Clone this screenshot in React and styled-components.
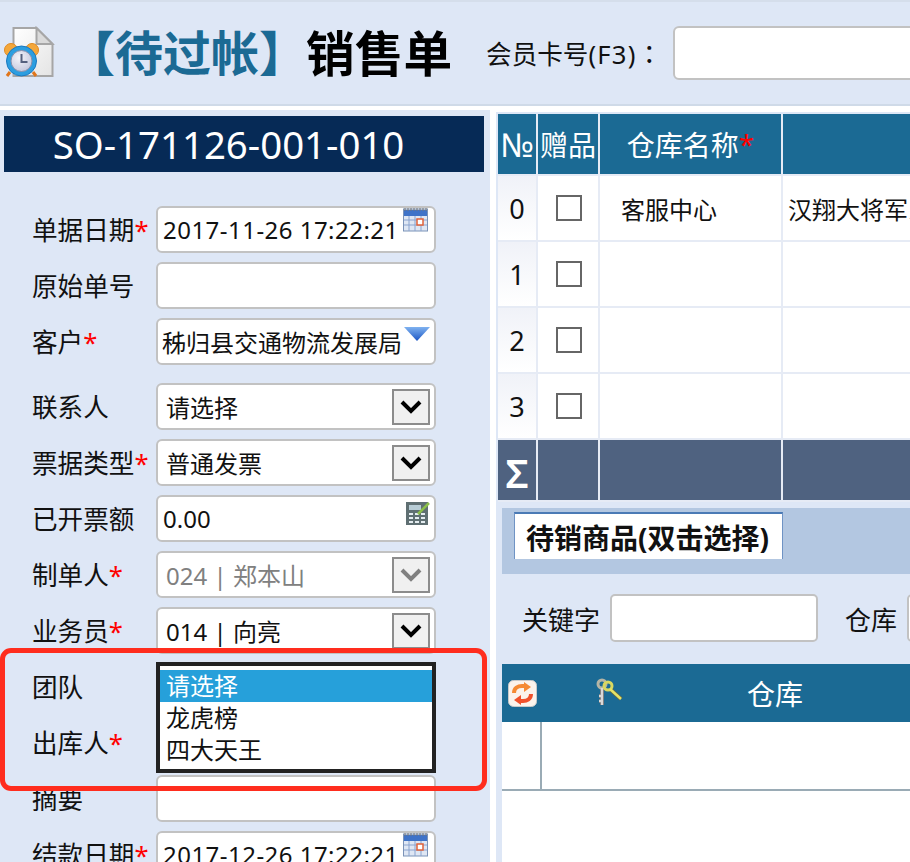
import React from 'react';
import styled, { createGlobalStyle } from 'styled-components';

const GlobalStyle = createGlobalStyle`
    html, body {
        margin: 0;
        padding: 0;
        background: #fff;
    }
    * {
        box-sizing: border-box;
    }
`;

const Page = styled.div`
    position: relative;
    width: 910px;
    height: 862px;
    overflow: hidden;
    background: #fff;
    color: #111;
    font-family: "Noto Sans", "Noto Sans CJK SC", sans-serif;
`;

const Header = styled.header`
    display: flex;
    align-items: center;
    height: 106px;
    padding-left: 3px;
    border-top: 2px solid #d5deeb;
    border-bottom: 2px solid #cfdae8;
    background: #dee7f6;
    white-space: nowrap;
`;

const Logo = styled.span`
    flex: none;
    display: flex;
`;

const Title = styled.h1`
    flex: none;
    margin: 0;
    font-size: ${props => props.$size}px;
    font-weight: 700;
    line-height: 1;
    color: ${props => props.$color};
`;

const Status = styled(Title)`
    margin-left: 12px;
    margin-right: -1px;
`;

const CardLabel = styled.span`
    flex: none;
    margin-left: 34px;
    font-size: 25.6px;
`;

const CardKey = styled.span`
    letter-spacing: 1.2px;
`;

const CardColon = styled.span`
    font-family: "Noto Sans CJK TC", sans-serif;
`;

const CardInput = styled.div`
    flex: none;
    width: 300px;
    height: 54px;
    margin-left: 11px;
    border: 2px solid #c2c2c2;
    border-radius: 6px;
    background: #fff;
`;

const Main = styled.main`
    display: flex;
    height: 752px;
    margin-top: 4px;
`;

const LeftPanel = styled.section`
    flex: none;
    width: 490px;
    padding: 6px 0 0 4px;
    background: #dee7f6;
`;

const OrderNo = styled.div`
    width: 480px;
    height: 56px;
    margin-bottom: 34px;
    padding-right: 31px;
    background: #062a56;
    color: #fff;
    font-size: 38.4px;
    line-height: 56px;
    text-align: center;
`;

const FormRow = styled.div`
    display: flex;
    align-items: flex-start;
    height: 56px;
    padding-left: 27px;
    margin-bottom: ${props => props.$gap || 0}px;
`;

const Label = styled.label`
    flex: none;
    width: 125px;
    height: 46px;
    padding-left: 1px;
    font-size: 25.6px;
    line-height: 49px;
    white-space: nowrap;
`;

const Star = styled.span`
    color: #f00;
`;

const Field = styled.div`
    position: relative;
    flex: none;
    display: flex;
    align-items: center;
    width: 280px;
    height: 47px;
    padding-left: ${props => props.$pad}px;
    border: 2px solid #c2c2c2;
    border-radius: 6px;
    background: #fff;
    color: ${props => props.$disabled ? '#808080' : '#111'};
    font-size: 24px;
    letter-spacing: ${props => props.$wide ? '0.47px' : 'normal'};
    white-space: nowrap;
`;

const FieldIcon = styled.span`
    position: absolute;
    top: ${props => props.$top}px;
    right: ${props => props.$right}px;
    display: flex;
`;

const SelectButton = styled.span`
    position: absolute;
    top: 4px;
    right: 4px;
    display: flex;
    align-items: center;
    justify-content: center;
    width: 38px;
    height: 36px;
    border: 2px solid #8c8c8c;
    background: #f0f0f0;
`;

const Dropdown = styled.ul`
    position: absolute;
    left: 156px;
    top: 662px;
    width: 280px;
    height: 111px;
    margin: 0;
    padding: 4px 0 0;
    border: 4px solid #222;
    background: #fff;
    list-style: none;
    font-size: 24px;
`;

const Option = styled.li`
    height: 32px;
    padding-left: 6px;
    line-height: 32px;
    background: ${props => props.$active ? '#26a0da' : 'transparent'};
    color: ${props => props.$active ? '#fff' : '#111'};
`;

const Callout = styled.div`
    position: absolute;
    left: 0;
    top: 648px;
    width: 487px;
    height: 143px;
    border: 5px solid #ff2d1e;
    border-radius: 11px;
    pointer-events: none;
`;

const RightPanel = styled.section`
    flex: none;
    width: 414px;
    margin-left: 6px;
    margin-top: 2px;
    background: #dee7f6;
    padding-top: 2px;
`;

const Table = styled.div`
    display: grid;
    grid-template-columns: 38px 60px 181px 140px;
    grid-template-rows: 60px repeat(4, 64px) 60px;
    gap: 2px;
    width: 426px;
    margin-left: 2px;
    padding-bottom: 2px;
    background: #e6ebf5;
`;

const HeadCell = styled.div`
    display: flex;
    align-items: center;
    justify-content: center;
    background: #1b6a94;
    color: #fff;
    font-size: ${props => props.$size || 28}px;
    white-space: nowrap;
`;

const IndexCell = styled.div`
    display: flex;
    align-items: center;
    justify-content: center;
    background: linear-gradient(#f0f2f8, #fff);
    font-size: 27px;
`;

const Cell = styled.div`
    display: flex;
    align-items: center;
    justify-content: ${props => props.$center ? 'center' : 'flex-start'};
    padding-left: ${props => props.$pad || 0}px;
    overflow: hidden;
    background: #fff;
    font-size: 24px;
    white-space: nowrap;
`;

const CheckBox = styled.span`
    display: block;
    width: 26px;
    height: 26px;
    border: 2px solid #666;
    background: #fff;
`;

const TotalCell = styled.div`
    display: flex;
    align-items: center;
    justify-content: center;
    padding-top: 5px;
    background: #4f6280;
    color: #fff;
    font-size: 40px;
    font-weight: 600;
`;

const Lower = styled.div`
    margin-left: 6px;
`;

const TabBar = styled.div`
    height: 66px;
    margin-top: 6px;
    padding: 4px 0 0 12px;
    background: #b3c7e1;
`;

const Tab = styled.div`
    width: 269px;
    height: 47px;
    padding-left: 11px;
    border: 1px solid #6f93c4;
    border-top: 2px solid #4a7ab5;
    border-bottom: 0;
    background: #fff;
    font-size: 28px;
    font-weight: 700;
    line-height: 48px;
    white-space: nowrap;
`;

const SearchRow = styled.div`
    display: flex;
    align-items: center;
    height: 88px;
    padding: 2px 0 0 20px;
    font-size: 26px;
    white-space: nowrap;
`;

const SearchInput = styled.div`
    flex: none;
    width: ${props => props.$width}px;
    height: 48px;
    margin: -3px 27px 0 10px;
    border: 2px solid #c2c2c2;
    border-radius: 5px;
    background: #fff;
`;

const GridHead = styled.div`
    display: flex;
    align-items: center;
    height: 58px;
    margin-top: 2px;
    padding-left: 6px;
    background: #1b6a94;
    color: #fff;
    font-size: 28px;
`;

const GridTitle = styled.span`
    margin-left: 124px;
`;

const KeyIcon = styled.span`
    display: flex;
    margin-left: 58px;
`;

const GridBody = styled.div`
    height: 150px;
    background: #fff;
`;

const GridRow = styled.div`
    width: 420px;
    height: 69px;
    border-bottom: 2px solid #9aabb5;
`;

const GridColumn = styled.div`
    width: 40px;
    height: 67px;
    border-right: 2px solid #9aabb5;
`;

const AlarmDocIcon = () => (
    <svg width="52" height="54" viewBox="0 0 52 54">
        <defs>
            <linearGradient id="doc" x1="0" y1="0" x2="1" y2="1">
                <stop offset="0" stopColor="#fff" />
                <stop offset="1" stopColor="#e4e4e4" />
            </linearGradient>
            <radialGradient id="face" cx="0.4" cy="0.35" r="0.8">
                <stop offset="0" stopColor="#f4f4fa" />
                <stop offset="1" stopColor="#bcc0d8" />
            </radialGradient>
        </defs>
        <path d="M10.5 2h23l16 16v32h-39z" fill="url(#doc)" stroke="#a6a6a6" strokeWidth="2" />
        <path d="M33.5 2v16h16z" fill="#dadada" stroke="#a6a6a6" strokeWidth="2" />
        <circle cx="8" cy="24" r="6.5" fill="#f4a73a" stroke="#e08a20" />
        <circle cx="29" cy="24" r="6.5" fill="#f4a73a" stroke="#e08a20" />
        <path d="M7 46l-3 4M30 46l3 4" stroke="#e0761c" strokeWidth="3" />
        <circle cx="18.5" cy="35" r="15" fill="#2c9ee0" stroke="#1a78c0" />
        <circle cx="18.5" cy="35" r="10.5" fill="url(#face)" stroke="#8a90ac" />
        <path d="M18.5 28v8h6" fill="none" stroke="#55607e" strokeWidth="2" />
    </svg>
);

const CalendarIcon = () => (
    <svg width="25" height="25" viewBox="0 0 25 25">
        <rect x="0.5" y="2" width="24" height="22" fill="#dfe7f4" stroke="#7b93b8" />
        <rect x="1" y="3" width="23" height="6" fill="#3f73c8" />
        <path d="M2 1v3M5 1v3M8 1v3M11 1v3M14 1v3M17 1v3M20 1v3M23 1v3" stroke="#777" />
        <path d="M1 13h23M1 18h23M6 9v15M12 9v15M18 9v15" stroke="#8ba4cf" />
        <rect x="14" y="12" width="6" height="6" fill="#fff" stroke="#e0623a" strokeWidth="1.5" />
    </svg>
);

const TriangleIcon = () => (
    <svg width="26" height="16" viewBox="0 0 26 16">
        <defs>
            <linearGradient id="tri" x1="0" y1="0" x2="0" y2="1">
                <stop offset="0" stopColor="#7fb2f0" />
                <stop offset="1" stopColor="#1a55c4" />
            </linearGradient>
        </defs>
        <path d="M0 1h26L13 15z" fill="url(#tri)" />
    </svg>
);

const CalculatorIcon = () => (
    <svg width="24" height="24" viewBox="0 0 24 24">
        <rect x="0" y="1" width="22" height="23" fill="#5f6f72" />
        <rect x="3" y="4" width="12" height="5" fill="#b8cdd6" />
        <path d="M3 13h4M9 13h4M15 13h4M3 17h4M9 17h4M15 17h4M3 21h4M9 21h4M15 21h4" stroke="#e4ecf0" strokeWidth="2" />
        <path d="M12 13L23 2" stroke="#8cc04a" strokeWidth="2.5" />
    </svg>
);

const ChevronIcon = ({ color }) => (
    <svg width="22" height="16" viewBox="0 0 22 16">
        <path d="M2 3l9 9 9-9" fill="none" stroke={color} strokeWidth="4" />
    </svg>
);

const RefreshIcon = () => (
    <svg width="29" height="27" viewBox="0 0 29 27">
        <rect x="0.5" y="0.5" width="28" height="26" rx="5" fill="#fbf3ec" stroke="#c9c9c9" />
        <path d="M6 13c0-5 4-7 8-7h4" fill="none" stroke="#f58a34" strokeWidth="4" />
        <path d="M16 2l7 5-7 5z" fill="#f58a34" />
        <path d="M23 14c0 5-4 7-8 7h-4" fill="none" stroke="#f0512c" strokeWidth="4" />
        <path d="M13 15l-7 5 7 5z" fill="#f0512c" />
    </svg>
);

const KeysIcon = () => (
    <svg width="28" height="30" viewBox="0 0 28 30">
        <path d="M7 10v17M7 18h-3M7 23h-3" stroke="#666" strokeWidth="4" />
        <path d="M15 11l11 10" stroke="#6a6a40" strokeWidth="4" />
        <circle cx="7" cy="6" r="4" fill="none" stroke="#b5b5a5" strokeWidth="3" />
        <path d="M7 10v17M7 18h-3M7 23h-3" stroke="#d8d8d8" strokeWidth="2.5" />
        <circle cx="13" cy="8" r="4" fill="none" stroke="#d8d860" strokeWidth="3" />
        <path d="M15 11l11 10" stroke="#e4e468" strokeWidth="2.5" />
    </svg>
);

const calendar = { node: <CalendarIcon />, top: -1, right: 6 };

const rows = [
    { label: '单据日期', required: true, value: '2017-11-26 17:22:21', pad: 5, wide: true, icon: calendar },
    { label: '原始单号', value: '', pad: 5 },
    { label: '客户', required: true, value: '秭归县交通物流发展局', pad: 4, icon: { node: <TriangleIcon />, top: 6, right: 4 }, gap: 9 },
    { label: '联系人', value: '请选择', pad: 8, select: true },
    { label: '票据类型', required: true, value: '普通发票', pad: 8, select: true },
    { label: '已开票额', value: '0.00', pad: 5, icon: { node: <CalculatorIcon />, top: 4, right: 4 } },
    { label: '制单人', required: true, value: '024 | 郑本山', pad: 8, select: true, disabled: true },
    { label: '业务员', required: true, value: '014 | 向亮', pad: 8, select: true },
    { label: '团队', value: '', pad: 8 },
    { label: '出库人', required: true, value: '', pad: 8 },
    { label: '摘要', value: '', pad: 5 },
    { label: '结款日期', required: true, value: '2017-12-26 17:22:21', pad: 5, wide: true, icon: calendar },
];

const teams = ['请选择', '龙虎榜', '四大天王'];

export default function App() {
    const renderRows = () => {
        return rows.map((item, key) => {
            return (
                <FormRow key={key} $gap={item.gap}>
                    <Label>{item.label}{item.required && <Star>*</Star>}</Label>
                    <Field $pad={item.pad} $disabled={item.disabled} $wide={item.wide}>
                        {item.value}
                        {item.icon && (
                            <FieldIcon $top={item.icon.top} $right={item.icon.right}>{item.icon.node}</FieldIcon>
                        )}
                        {item.select && (
                            <SelectButton>
                                <ChevronIcon color={item.disabled ? '#808080' : '#000'} />
                            </SelectButton>
                        )}
                    </Field>
                </FormRow>
            );
        });
    };

    const renderTableRows = () => {
        return [0, 1, 2, 3].map(index => {
            return (
                <React.Fragment key={index}>
                    <IndexCell>{index}</IndexCell>
                    <Cell $center $pad={2}><CheckBox /></Cell>
                    <Cell $pad={21}>{index === 0 ? '客服中心' : ''}</Cell>
                    <Cell $pad={5}>{index === 0 ? '汉翔大将军系列' : ''}</Cell>
                </React.Fragment>
            );
        });
    };

    return (
        <Page>
            <GlobalStyle />
            <Header>
                <Logo><AlarmDocIcon /></Logo>
                <Status $size={48} $color="#1b6a94">【待过帐】</Status>
                <Title $size={48.7} $color="#000">销售单</Title>
                <CardLabel>会员卡号<CardKey>(F3)</CardKey><CardColon>：</CardColon></CardLabel>
                <CardInput />
            </Header>
            <Main>
                <LeftPanel>
                    <OrderNo>SO-171126-001-010</OrderNo>
                    {renderRows()}
                </LeftPanel>
                <RightPanel>
                    <Table>
                        <HeadCell $size={33}>№</HeadCell>
                        <HeadCell>赠品</HeadCell>
                        <HeadCell>仓库名称<Star>*</Star></HeadCell>
                        <HeadCell />
                        {renderTableRows()}
                        <TotalCell>Σ</TotalCell>
                        <TotalCell />
                        <TotalCell />
                        <TotalCell />
                    </Table>
                    <Lower>
                        <TabBar>
                            <Tab>待销商品(双击选择)</Tab>
                        </TabBar>
                        <SearchRow>
                            关键字
                            <SearchInput $width={208} />
                            仓库
                            <SearchInput $width={100} />
                        </SearchRow>
                        <GridHead>
                            <RefreshIcon />
                            <KeyIcon><KeysIcon /></KeyIcon>
                            <GridTitle>仓库</GridTitle>
                        </GridHead>
                        <GridBody>
                            <GridRow>
                                <GridColumn />
                            </GridRow>
                        </GridBody>
                    </Lower>
                </RightPanel>
            </Main>
            <Dropdown>
                {teams.map((team, key) => (
                    <Option key={key} $active={key === 0}>{team}</Option>
                ))}
            </Dropdown>
            <Callout />
        </Page>
    );
}
